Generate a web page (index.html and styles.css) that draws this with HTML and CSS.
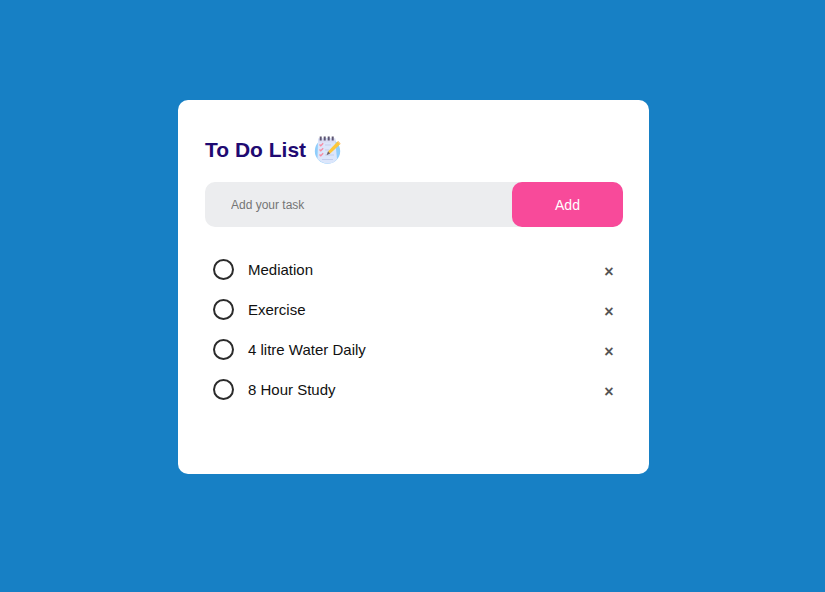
FILE: index.html
```html
<!DOCTYPE html>
<html lang="en">
<head>
<meta charset="utf-8">
<meta name="viewport" content="width=device-width, initial-scale=1">
<title>To Do List</title>
<link rel="stylesheet" href="styles.css">
</head>
<body>
<main class="card">
  <h1 class="title">To Do List
    <svg class="title-icon" viewBox="0 0 28 28" aria-hidden="true">
      <circle cx="13.500" cy="15" r="12.700" fill="#8fcdfb"/>
      <path d="M4 2.500h17l2 20.500-3 3.300q-6 2.500-12 0L3.500 23z" fill="#dce6fb"/>
      <path d="M4.500 2.500h17v4h-17z" fill="#dadcf3"/>
      <path d="M6.700 0.500v4M10.700 0.500v4M14.700 0.500v4M18.700 0.500v4" stroke="#5d5572" stroke-width="2"/>
      <path d="M11 9h6M11 14h4M11 19h9M8 23.500h11" stroke="#c3cdec"/>
      <path d="M5.500 8.500l1.300 1.300 2.400-2.600M5.500 13.500l1.300 1.300 2.400-2.600M5.500 18.500l1.300 1.300 2.400-2.600" fill="none" stroke="#f68da5" stroke-width="1.300"/>
      <path d="M14 15.500L23.500 5.500l2.700 2.700-10 9.300z" fill="#fdc73b"/>
      <path d="M23.500 5.500l.7-.5 2.300 2.400-.3.800z" fill="#fbb352"/>
      <path d="M14 15.300l2.200 2.200-3.700 1.700z" fill="#73646b"/>
    </svg>
  </h1>
  <form class="entry">
    <input class="entry-text" type="text" placeholder="Add your task" aria-label="Add your task">
    <button class="entry-add" type="button">Add</button>
  </form>
  <ul class="tasks">
    <li class="task"><label class="task-label"><input class="task-check" type="checkbox">Mediation</label><button class="task-remove" type="button" aria-label="Remove Mediation">×</button></li>
    <li class="task"><label class="task-label"><input class="task-check" type="checkbox">Exercise</label><button class="task-remove" type="button" aria-label="Remove Exercise">×</button></li>
    <li class="task"><label class="task-label"><input class="task-check" type="checkbox">4 litre Water Daily</label><button class="task-remove" type="button" aria-label="Remove 4 litre Water Daily">×</button></li>
    <li class="task"><label class="task-label"><input class="task-check" type="checkbox">8 Hour Study</label><button class="task-remove" type="button" aria-label="Remove 8 Hour Study">×</button></li>
  </ul>
</main>
</body>
</html>
```
FILE: styles.css
```css
* {
  box-sizing: border-box;
  margin: 0;
  padding: 0;
}

body {
  min-height: 100vh;
  padding: 100px 10px 20px 12px;
  background: #1780c5;
  color: #111;
  font-family: "Liberation Sans", Arial, sans-serif;
}

button,
input {
  border: 0;
  outline: 0;
  font-family: inherit;
}

.card {
  max-width: 471px;
  margin: 0 auto;
  padding: 36px 26px 65px 27px;
  border-radius: 10px;
  background: #fff;
}

.title {
  display: flex;
  align-items: center;
  gap: 8px;
  margin-bottom: 18px;
  color: #1f0a72;
  font-size: 21px;
  line-height: 28px;
}

.title-icon {
  width: 28px;
  height: 28px;
}

.entry {
  display: flex;
  margin-bottom: 22px;
  border-radius: 10px;
  background: #ecedef;
}

.entry-text {
  flex: 1;
  min-width: 0;
  padding: 0 26px;
  background: transparent;
  font-size: 12px;
}

.entry-text::placeholder {
  color: #757575;
}

.entry-add {
  width: 111px;
  height: 45px;
  border-radius: 10px;
  background: #f84a9a;
  color: #fff;
  font-size: 14px;
}

.tasks {
  list-style: none;
}

.task {
  display: flex;
  align-items: center;
  height: 40px;
  padding: 0 4px 0 8px;
}

.task-label {
  display: flex;
  flex: 1;
  align-items: center;
  gap: 14px;
  font-size: 15px;
}

.task-check {
  appearance: none;
  width: 21px;
  height: 21px;
  border: 2px solid #2b2b2b;
  border-radius: 50%;
}

.task-remove {
  width: 20px;
  height: 20px;
  margin-top: 6px;
  background: transparent;
  color: #555;
  font-size: 16px;
  font-weight: bold;
  line-height: 20px;
}
```
